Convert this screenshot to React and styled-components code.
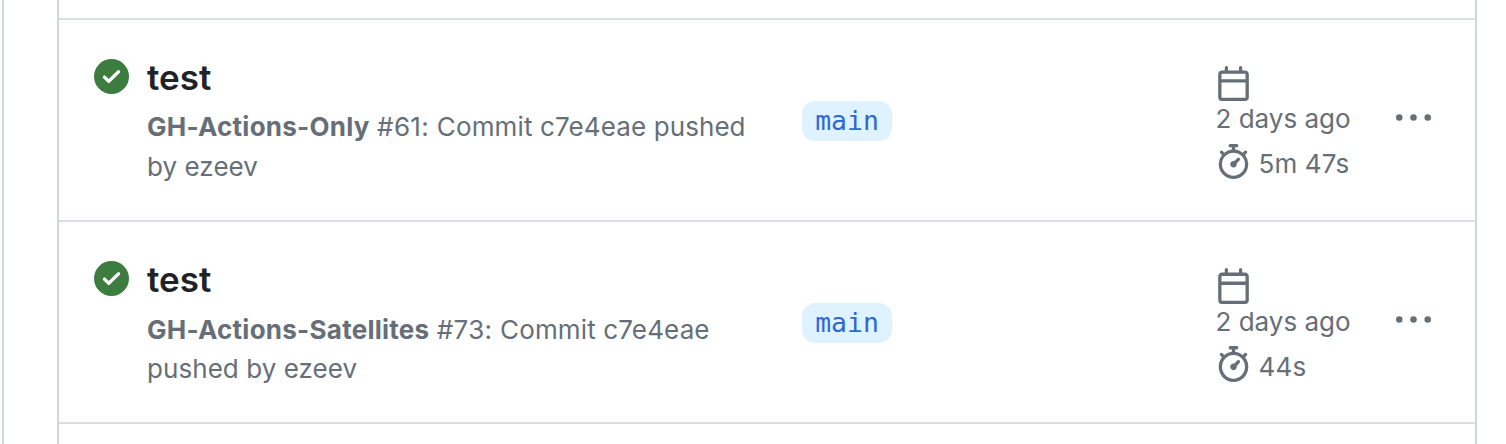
import React from "react";
import styled, { createGlobalStyle } from "styled-components";

const GlobalStyle = createGlobalStyle`
  * { box-sizing: border-box; }
  body {
    margin: 0;
    background: #fff;
    color: #666e77;
    font-family: Inter, "Liberation Sans", sans-serif;
    overflow: hidden;
  }
`;

const Page = styled.main`
  height: 444px;
  overflow: hidden;
  padding: 0 29px 0 55px;
  margin-left: 2px;
  border-left: 2px solid #d2d7de;
  display: flex;
  flex-direction: column;
`;

const RunList = styled.div`
  flex: 1;
  margin-left: -2px;
  padding-top: 18px;
  border: solid #d0d6de;
  border-width: 0 2px;
`;

const Run = styled.article`
  height: 202px;
  border-top: 2px solid #d8dde3;
  display: grid;
  grid-template-columns: 88px 655px 413.5px 172.5px 1fr;
`;

const ListEnd = styled.div`
  border-top: 2px solid #d8dde3;
`;

const Status = styled.div`
  padding: 39px 0 0 35px;
`;

const Icon = styled.svg`
  display: block;
  flex: none;
  width: 35px;
  height: ${(p) => p.$height || 35}px;
  fill: ${(p) => p.$color || "#666e77"};
`;

const Summary = styled.div`
  padding-top: 35px;
`;

const Title = styled.h2`
  margin: 0;
  color: #1f2328;
  font-size: 35px;
  font-weight: 600;
  line-height: 44px;
`;

const Description = styled.p`
  margin: ${(p) => p.$offset}px 0 0;
  width: 620px;
  font-size: 26px;
  line-height: 39.6px;
  letter-spacing: 0.06px;
`;

const Workflow = styled.strong`
  font-weight: 650;
  letter-spacing: 0.25px;
`;

const RunNumber = styled.span`
  letter-spacing: 0.35px;
`;

const Commit = styled.span`
  letter-spacing: 0.14px;
`;

const BranchCell = styled.div`
  padding-top: 81px;
`;

const Branch = styled.span`
  display: block;
  width: 90px;
  height: 40px;
  border-radius: 13px;
  background: #dff2ff;
  color: #2f67d5;
  font-family: "DejaVu Sans Mono", "Liberation Mono", monospace;
  font-size: 26.4px;
  line-height: 39px;
  text-align: center;
`;

const Timing = styled.div`
  padding-top: 46px;
  font-size: 26px;
`;

const Age = styled.div`
  height: 36px;
  line-height: 36px;
  white-space: nowrap;
`;

const Duration = styled.div`
  display: flex;
  gap: 8px;
  margin-top: ${(p) => p.$gap}px;
  line-height: ${(p) => p.$lineHeight}px;
  letter-spacing: 0.15px;
  white-space: nowrap;
`;

const MenuButton = styled.button`
  align-self: start;
  width: 50px;
  margin-top: 81px;
  padding: 0 0 0 8px;
  border: 0;
  background: none;
`;

const CHECK =
  "M8 16A8 8 0 1 1 8 0a8 8 0 0 1 0 16Zm3.78-9.72a.751.751 0 0 0-.018-1.042.751.751 0 0 0-1.042-.018L6.75 9.19 5.28 7.72a.751.751 0 0 0-1.042.018.751.751 0 0 0-.018 1.042l2 2a.75.75 0 0 0 1.06 0Z";
const CALENDAR =
  "M4.75 0a.75.75 0 0 1 .75.75V2h5V.75a.75.75 0 0 1 1.5 0V2h1.25c.966 0 1.75.784 1.75 1.75v10.5A1.75 1.75 0 0 1 13.25 16H2.75A1.75 1.75 0 0 1 1 14.25V3.75C1 2.784 1.784 2 2.75 2H4V.75A.75.75 0 0 1 4.75 0ZM2.5 7.5v6.75c0 .138.112.25.25.25h10.5a.25.25 0 0 0 .25-.25V7.5Zm10.75-4H2.75a.25.25 0 0 0-.25.25V6h11V3.75a.25.25 0 0 0-.25-.25Z";
const STOPWATCH =
  "M5.75.75A.75.75 0 0 1 6.5 0h3a.75.75 0 0 1 0 1.5h-.75v1l-.001.041a6.724 6.724 0 0 1 3.464 1.435l.007-.006.75-.75a.749.749 0 0 1 1.275.326.749.749 0 0 1-.215.734l-.75.75-.006.007a6.75 6.75 0 1 1-10.548 0L2.72 5.03l-.75-.75a.751.751 0 0 1 .018-1.042.751.751 0 0 1 1.042-.018l.75.75.007.006A6.72 6.72 0 0 1 7.25 2.541V1.5H6.5a.75.75 0 0 1-.75-.75ZM8 14.5a5.25 5.25 0 1 0-.001-10.501A5.25 5.25 0 0 0 8 14.5Zm.389-6.7 1.33-1.33a.75.75 0 1 1 1.061 1.06L9.45 8.861A1.503 1.503 0 0 1 8 10.75a1.499 1.499 0 1 1 .389-2.95Z";
const KEBAB =
  "M8 9a1.5 1.5 0 1 0 0-3 1.5 1.5 0 0 0 0 3ZM1.5 9a1.5 1.5 0 1 0 0-3 1.5 1.5 0 0 0 0 3Zm13 0a1.5 1.5 0 1 0 0-3 1.5 1.5 0 0 0 0 3Z";

const runs = [
  { workflow: "GH-Actions-Only", number: 61, duration: "5m 47s", offset: 8, iconHeight: 35, gap: 7, lineHeight: 39 },
  { workflow: "GH-Actions-Satellites", number: 73, duration: "44s", offset: 8.6, iconHeight: 36, gap: 6, lineHeight: 41 },
];

function Glyph({ path, color, height }) {
  return (
    <Icon
      viewBox="0 0 16 16"
      preserveAspectRatio="none"
      $color={color}
      $height={height}
      aria-hidden="true"
    >
      <path d={path} />
    </Icon>
  );
}

export default function App() {
  return (
    <Page>
      <GlobalStyle />
      <RunList>
        {runs.map((run) => (
          <Run key={run.number}>
            <Status>
              <Glyph path={CHECK} color="#3c7d3f" />
            </Status>
            <Summary>
              <Title>test</Title>
              <Description $offset={run.offset}>
                <Workflow>{run.workflow}</Workflow>{" "}
                <RunNumber>{`#${run.number}: `}</RunNumber>
                <Commit>Commit c7e4eae</Commit> pushed by ezeev
              </Description>
            </Summary>
            <BranchCell>
              <Branch>main</Branch>
            </BranchCell>
            <Timing>
              <Glyph path={CALENDAR} height={run.iconHeight} />
              <Age>2 days ago</Age>
              <Duration $gap={run.gap} $lineHeight={run.lineHeight}>
                <Glyph path={STOPWATCH} height={run.iconHeight} />
                {run.duration}
              </Duration>
            </Timing>
            <MenuButton aria-label="Show options">
              <Glyph path={KEBAB} />
            </MenuButton>
          </Run>
        ))}
        <ListEnd />
      </RunList>
    </Page>
  );
}
